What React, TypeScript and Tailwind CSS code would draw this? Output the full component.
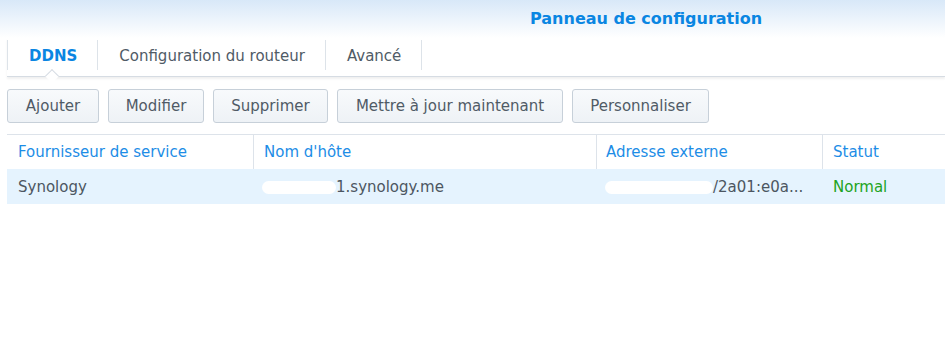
import React from "react";

const tabs = ["DDNS", "Configuration du routeur", "Avancé"];

const buttons = [
  { label: "Ajouter", w: "w-[92px]" },
  { label: "Modifier", w: "w-[96px]" },
  { label: "Supprimer", w: "w-[115px]" },
  { label: "Mettre à jour maintenant", w: "w-[226px]" },
  { label: "Personnaliser", w: "w-[137px]" },
];

// masque blanc posé sur les parties masquées de la capture
const Blur = ({ w }: { w: string }) => (
  <span className={`inline-block h-[13px] ${w} rounded-full bg-white align-middle`} />
);

const App = () => {
  return (
    <div className="w-[945px] h-[364px] overflow-hidden bg-white font-['DejaVu_Sans','Noto_Sans',sans-serif] text-[15px]">
      {/* en-tête */}
      <div className="h-[38px] bg-gradient-to-b from-[#d8e8f8] to-white flex items-center pl-[530px]">
        <span className="text-[16px] font-bold text-[#0a86e2]">
          Panneau de configuration
        </span>
      </div>

      {/* onglets */}
      <div className="relative ml-[7px] h-[39px] pt-[2px] border-b border-[#d6dce3] shadow-[0_2px_2px_rgba(0,0,0,0.06)]">
        <div className="flex h-[30px] border-l border-[#dde3e9] w-fit">
          {tabs.map((t, i) => (
            <div
              key={t}
              className={`flex items-center pl-[21px] pr-[20px] pt-[2px] border-r border-[#dde3e9] ${
                i === 0 ? "font-bold text-[#0a86e2]" : "text-[#505b66]"
              }`}
            >
              {t}
            </div>
          ))}
        </div>
        {/* petit repère sous l'onglet actif */}
        <div className="absolute left-[40px] bottom-[-5px] w-[10px] h-[10px] rotate-45 bg-white border-l border-t border-[#d6dce3]" />
      </div>

      {/* boutons */}
      <div className="flex gap-[9px] px-[7px] mt-[12px]">
        {buttons.map((b) => (
          <div
            key={b.label}
            className={`${b.w} h-[34px] flex items-center justify-center rounded-[3px] border border-[#c7d0d9] bg-gradient-to-b from-[#f8fafc] to-[#eef2f6] text-[#505b66]`}
          >
            {b.label}
          </div>
        ))}
      </div>

      {/* tableau */}
      <div className="ml-[7px] mt-[11px] border-t border-[#dde3ea]">
        <div className="flex h-[34px] text-[#1d8de6]">
          <div className="w-[247px] flex items-center pl-[11px] border-r border-[#dde3ea]">
            Fournisseur de service
          </div>
          <div className="w-[343px] flex items-center pl-[10px] border-r border-[#dde3ea]">
            Nom d'hôte
          </div>
          <div className="w-[226px] flex items-center pl-[9px] border-r border-[#dde3ea]">
            Adresse externe
          </div>
          <div className="flex-1 flex items-center pl-[10px]">Statut</div>
        </div>
        <div className="flex h-[35px] pt-[2px] bg-[#e5f3fe] text-[#4c5661]">
          <div className="w-[247px] flex items-center pl-[11px]">Synology</div>
          <div className="w-[343px] flex items-center pl-[8px]">
            <Blur w="w-[74px]" />
            <span>1.synology.me</span>
          </div>
          <div className="w-[226px] flex items-center pl-[8px]">
            <Blur w="w-[108px]" />
            <span>/2a01:e0a...</span>
          </div>
          <div className="flex-1 flex items-center pl-[10px] text-[#22a322]">Normal</div>
        </div>
      </div>
    </div>
  );
};

export default App;
